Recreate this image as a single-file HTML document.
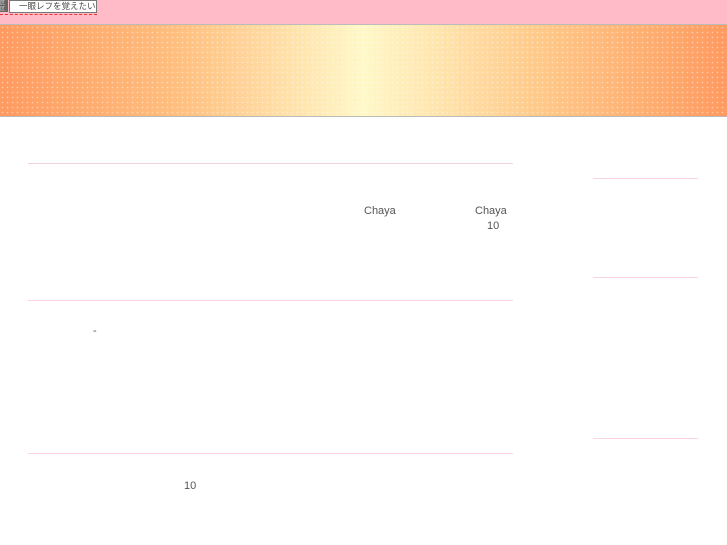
<!DOCTYPE html>
<html><head><meta charset="utf-8"><style>
body{margin:0;width:727px;height:545px;background:#fff;position:relative;overflow:hidden;font-family:"Liberation Sans","Noto Sans CJK JP",sans-serif}
.a{position:absolute}
.t{font-size:11px;color:#555}
.ln{position:absolute;height:1px;background:#fcd5dd}
</style></head><body>
<div class="a" style="left:0;top:0;width:727px;height:24px;background:#ffbcc8"></div>
<div class="a" style="left:0;top:0;width:8px;height:12px;background:#666;color:#ddd;font-size:5px;line-height:6px;overflow:hidden">区<br>区</div>
<div class="a" style="left:9px;top:0;width:86px;height:11px;background:#fff;border:1px solid #777;font-size:8.5px;line-height:11px;color:#444;padding-left:9px;box-sizing:border-box;width:88px;height:13px;white-space:nowrap;overflow:hidden">一眼レフを覚えたい</div>
<div class="a" style="left:0;top:14px;width:97px;height:0;border-top:1px dashed #e33"></div>
<div class="a" style="left:0;top:24px;width:727px;height:93px;background:linear-gradient(90deg,#ff9a60 0%,#ffc080 25%,#fff8c8 50%,#ffc888 75%,#ff9a60 100%);border-top:1px solid #bbb;border-bottom:1px solid #bbb;box-sizing:border-box"></div>
<div class="a" style="left:0;top:25px;width:727px;height:91px;background-image:radial-gradient(rgba(255,255,255,.45) 0.7px,transparent 0.9px);background-size:5px 5px"></div>
<div class="ln" style="left:28px;top:163px;width:485px;background:#f0d4d9"></div>
<div class="ln" style="left:28px;top:300px;width:485px"></div>
<div class="ln" style="left:28px;top:453px;width:485px"></div>
<div class="ln" style="left:593px;top:178px;width:105px"></div>
<div class="ln" style="left:593px;top:277px;width:105px"></div>
<div class="ln" style="left:593px;top:438px;width:105px"></div>
<div class="a t" style="left:364px;top:205px">Chaya</div>
<div class="a t" style="left:475px;top:205px">Chaya</div>
<div class="a t" style="left:487px;top:220px">10</div>
<div class="a t" style="left:93px;top:325px">-</div>
<div class="a t" style="left:184px;top:480px">10</div>
</body></html>
